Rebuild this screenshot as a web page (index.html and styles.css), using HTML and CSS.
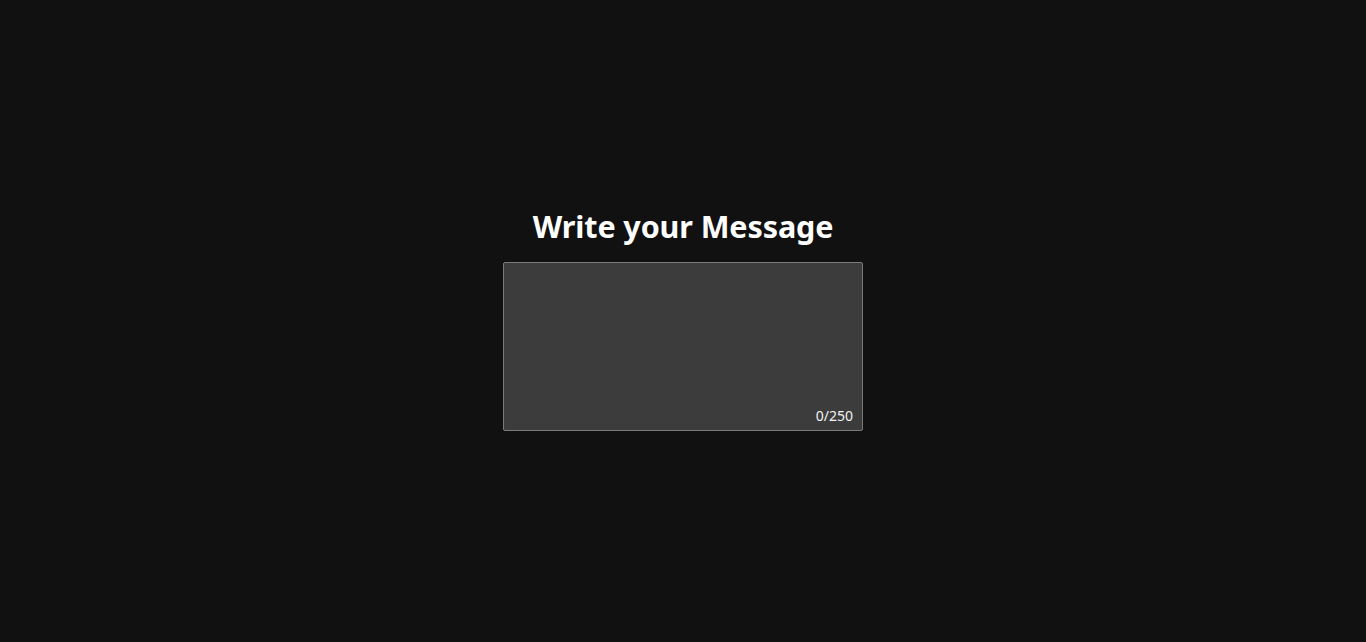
FILE: index.html
```html
<!DOCTYPE html>
<html lang="en">
<head>
<meta charset="utf-8">
<title>Write your Message</title>
<link rel="stylesheet" href="styles.css">
</head>
<body>
<main class="page">
  <section class="composer">
    <h1 class="title">Write your Message</h1>
    <div class="field">
      <textarea class="message" maxlength="250" aria-label="Message"></textarea>
      <span class="counter">0/250</span>
    </div>
  </section>
</main>
</body>
</html>
```
FILE: styles.css
```css
html, body {
  margin: 0;
  padding: 0;
  height: 100%;
  background: #111111;
}
body {
  font-family: "Noto Sans", "Open Sans", "Liberation Sans", sans-serif;
  color: #ffffff;
}
.page {
  height: 642px;
  display: flex;
  align-items: center;
  justify-content: center;
}
.composer {
  display: flex;
  flex-direction: column;
  align-items: center;
  gap: 16px;
  margin-top: -5px;
}
.title {
  margin: 0;
  font-size: 30.5px;
  font-weight: 700;
  line-height: 40px;
  letter-spacing: -0.1px;
}
.field {
  position: relative;
  width: 360px;
  height: 169px;
}
.message {
  box-sizing: border-box;
  width: 100%;
  height: 100%;
  margin: 0;
  display: block;
  resize: none;
  background: #3c3c3c;
  border: 1px solid #7a7a7a;
  border-radius: 2px;
  color: #ffffff;
  font-family: inherit;
  font-size: 14px;
  padding: 8px;
  outline: none;
}
.counter {
  position: absolute;
  right: 10px;
  bottom: 6px;
  font-size: 14px;
  line-height: 18px;
  color: #f2f2f2;
}
```
